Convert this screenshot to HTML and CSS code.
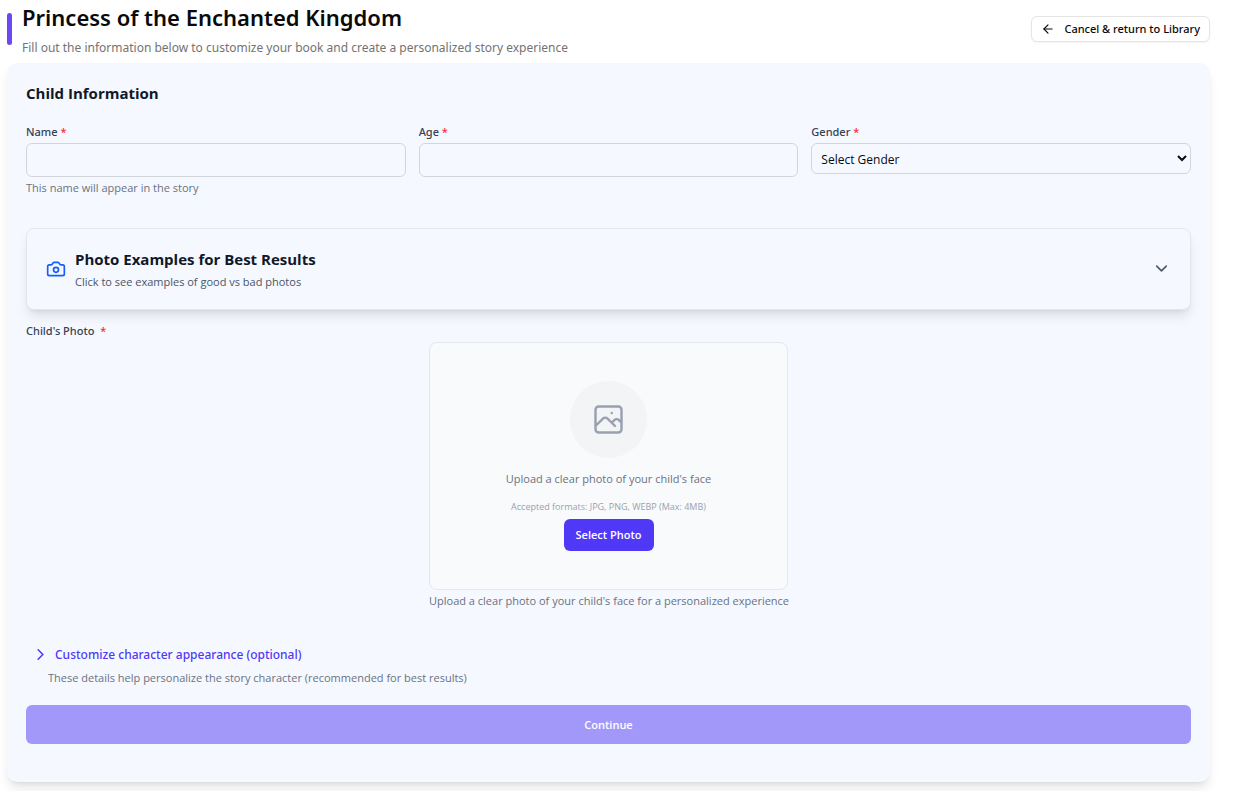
FILE: index.html
```html
<!DOCTYPE html>
<html lang="en">
<head>
<meta charset="utf-8">
<title>Princess of the Enchanted Kingdom</title>
<link rel="stylesheet" href="styles.css">
</head>
<body>
<main class="page">
  <header class="page-header">
    <div class="heading">
      <span class="heading-accent"></span>
      <div class="heading-text">
        <h1 class="title">Princess of the Enchanted Kingdom</h1>
        <p class="subtitle">Fill out the information below to customize your book and create a personalized story experience</p>
      </div>
    </div>
    <button type="button" class="cancel-button">
      <svg class="icon icon-small" viewBox="0 0 24 24"><path d="m12 19-7-7 7-7"/><path d="M19 12H5"/></svg>
      Cancel &amp; return to Library
    </button>
  </header>

  <form class="card">
    <h2 class="section-title">Child Information</h2>

    <div class="fields">
      <div class="field">
        <label class="label" for="name">Name <span class="required">*</span></label>
        <input class="control" type="text" id="name">
        <p class="hint">This name will appear in the story</p>
      </div>
      <div class="field">
        <label class="label" for="age">Age <span class="required">*</span></label>
        <input class="control" type="text" id="age">
      </div>
      <div class="field">
        <label class="label" for="gender">Gender <span class="required">*</span></label>
        <select class="control control-select" id="gender">
          <option>Select Gender</option>
          <option>Girl</option>
          <option>Boy</option>
        </select>
      </div>
    </div>

    <button type="button" class="examples">
      <svg class="icon icon-camera" viewBox="0 0 24 24"><path d="M13.997 4a2 2 0 0 1 1.76 1.05l.486.9A2 2 0 0 0 18.003 7H20a2 2 0 0 1 2 2v9a2 2 0 0 1-2 2H4a2 2 0 0 1-2-2V9a2 2 0 0 1 2-2h1.997a2 2 0 0 0 1.759-1.048l.489-.904A2 2 0 0 1 10.004 4z"/><circle cx="12" cy="13" r="3"/></svg>
      <span class="examples-text">
        <span class="examples-title">Photo Examples for Best Results</span>
        <span class="examples-note">Click to see examples of good vs bad photos</span>
      </span>
      <svg class="icon icon-chevron icon-muted" viewBox="0 0 24 24"><path d="m6 9 6 6 6-6"/></svg>
    </button>

    <label class="label photo-label" for="select-photo">Child's Photo <span class="required">*</span></label>
    <div class="photo">
      <div class="dropzone">
        <span class="photo-badge">
          <svg class="icon-photo" viewBox="0 0 24 24"><path d="M4 16l4.586-4.586a2 2 0 012.828 0L16 16m-2-2l1.586-1.586a2 2 0 012.828 0L20 14m-6-6h.01M6 20h12a2 2 0 002-2V6a2 2 0 00-2-2H6a2 2 0 00-2 2v12a2 2 0 002 2z"/></svg>
        </span>
        <p class="dropzone-text">Upload a clear photo of your child's face</p>
        <p class="dropzone-formats">Accepted formats: JPG, PNG, WEBP (Max: 4MB)</p>
        <button type="button" class="select-button" id="select-photo">Select Photo</button>
      </div>
      <p class="photo-hint">Upload a clear photo of your child's face for a personalized experience</p>
    </div>

    <button type="button" class="customize">
      <svg class="icon icon-chevron" viewBox="0 0 24 24"><path d="m9 18 6-6-6-6"/></svg>
      Customize character appearance (optional)
    </button>
    <p class="customize-note">These details help personalize the story character (recommended for best results)</p>

    <button type="submit" class="continue" disabled>Continue</button>
  </form>
</main>
</body>
</html>
```
FILE: styles.css
```css
* {
  box-sizing: border-box;
}

body,
h1,
h2,
p {
  margin: 0;
}

body {
  background: #fff;
  color: #0a0a0a;
  font: 11px/16px "Open Sans", sans-serif;
}

button,
input,
select {
  font: inherit;
  color: inherit;
  margin: 0;
}

.page {
  padding: 0 25px 9px 7px;
}

.icon {
  flex: none;
  fill: none;
  stroke: currentColor;
  stroke-width: 2;
  stroke-linecap: round;
  stroke-linejoin: round;
}

.icon-small {
  width: 14px;
  height: 14px;
}

.icon-chevron {
  width: 19px;
  height: 19px;
}

.icon-camera {
  width: 20px;
  height: 20px;
  color: #155dfc;
}

.icon-muted {
  color: #4a5565;
}

.title,
.subtitle,
.label,
.cancel-button,
.customize {
  font-family: "Noto Sans", sans-serif;
}

/* Header */

.page-header {
  display: flex;
  justify-content: space-between;
  align-items: center;
  height: 57px;
  margin-bottom: 6px;
}

.heading {
  display: flex;
  align-items: center;
  gap: 10px;
}

.heading-accent {
  width: 5px;
  height: 32px;
  border-radius: 4px;
  background: #6c47f5;
}

.title {
  margin-bottom: 7px;
  font-size: 22px;
  line-height: 32px;
  font-weight: 600;
}

.subtitle {
  font-size: 12px;
  line-height: 16px;
  color: #737373;
}

.cancel-button {
  display: flex;
  align-items: center;
  gap: 9px;
  height: 26px;
  padding: 0 9px;
  border: 1px solid #e5e5e5;
  border-radius: 6px;
  background: #fff;
  font-weight: 500;
  box-shadow: 0 1px 2px rgba(0, 0, 0, 0.05);
}

/* Card */

.card {
  display: flex;
  flex-direction: column;
  padding: 19px 19px 38px;
  border-radius: 10px;
  background: #f5f8ff;
  box-shadow: 0 8px 12px -2px rgba(0, 0, 0, 0.1), 0 3px 5px -3px rgba(0, 0, 0, 0.1);
}

.section-title {
  margin-bottom: 20px;
  font-size: 15px;
  line-height: 22px;
  font-weight: 700;
  color: #101828;
}

.fields {
  display: grid;
  grid-template-columns: repeat(3, 1fr);
  align-items: start;
  gap: 13px;
  margin-bottom: 32px;
}

.field {
  display: flex;
  flex-direction: column;
}

.label {
  margin-bottom: 3px;
  font-weight: 500;
  color: #364153;
}

.required {
  color: #fb2c36;
}

.control {
  width: 100%;
  height: 34px;
  padding: 0 9px;
  border: 1px solid #d1d5dc;
  border-radius: 6px;
  background: transparent;
  font-size: 12px;
}

.control-select {
  height: 31px;
  padding: 1px 5px 0;
}

.hint {
  margin-top: 3px;
  color: #6a7282;
}

/* Photo examples */

.examples {
  display: flex;
  align-items: center;
  gap: 9px;
  height: 82px;
  margin-bottom: 13px;
  padding: 0 19px 1px;
  border: 1px solid #e5e7eb;
  border-radius: 8px;
  background: #f5f8ff;
  text-align: left;
  box-shadow: 0 8px 12px -2px rgba(0, 0, 0, 0.1), 0 3px 5px -3px rgba(0, 0, 0, 0.1);
}

.examples-text {
  display: flex;
  flex: 1;
  flex-direction: column;
  gap: 4px;
}

.examples-title {
  font-size: 15px;
  line-height: 22px;
  font-weight: 700;
  color: #101828;
}

.examples-note {
  color: #4a5565;
}

/* Photo upload */

.photo-label .required {
  margin-left: 3px;
}

.photo {
  width: 359px;
  margin: 0 auto 36px;
}

.dropzone {
  display: flex;
  flex-direction: column;
  align-items: center;
  padding: 38px 19px;
  border: 1px solid #e5e7eb;
  border-radius: 8px;
  background: #f9fafb;
}

.photo-badge {
  display: grid;
  place-items: center;
  width: 77px;
  height: 77px;
  margin-bottom: 13px;
  border-radius: 50%;
  background: #f3f4f6;
}

.icon-photo {
  width: 39px;
  height: 39px;
  fill: none;
  stroke: #99a1af;
  stroke-width: 1.5;
  stroke-linecap: round;
  stroke-linejoin: round;
}

.dropzone-text {
  margin-bottom: 12px;
  color: #6a7282;
}

.dropzone-formats {
  margin-bottom: 5px;
  font-size: 9px;
  line-height: 15px;
  color: #99a1af;
}

.select-button {
  height: 32px;
  padding: 0 12px;
  border: 0;
  border-radius: 6px;
  background: #4f39f6;
  color: #fff;
  font-weight: 600;
}

.photo-hint {
  margin-top: 3px;
  white-space: nowrap;
  color: #6a7282;
}

/* Character appearance */

.customize {
  display: flex;
  align-items: center;
  align-self: flex-start;
  gap: 5px;
  margin-bottom: 6px;
  padding: 0 5px;
  border: 0;
  background: none;
  font-size: 12px;
  line-height: 19px;
  font-weight: 500;
  color: #4f39f6;
}

.customize-note {
  margin: 0 0 19px 22px;
  color: #6a7282;
}

.continue {
  height: 39px;
  border: 0;
  border-radius: 6px;
  background: #a298fa;
  color: #fff;
  font-weight: 600;
}
```
